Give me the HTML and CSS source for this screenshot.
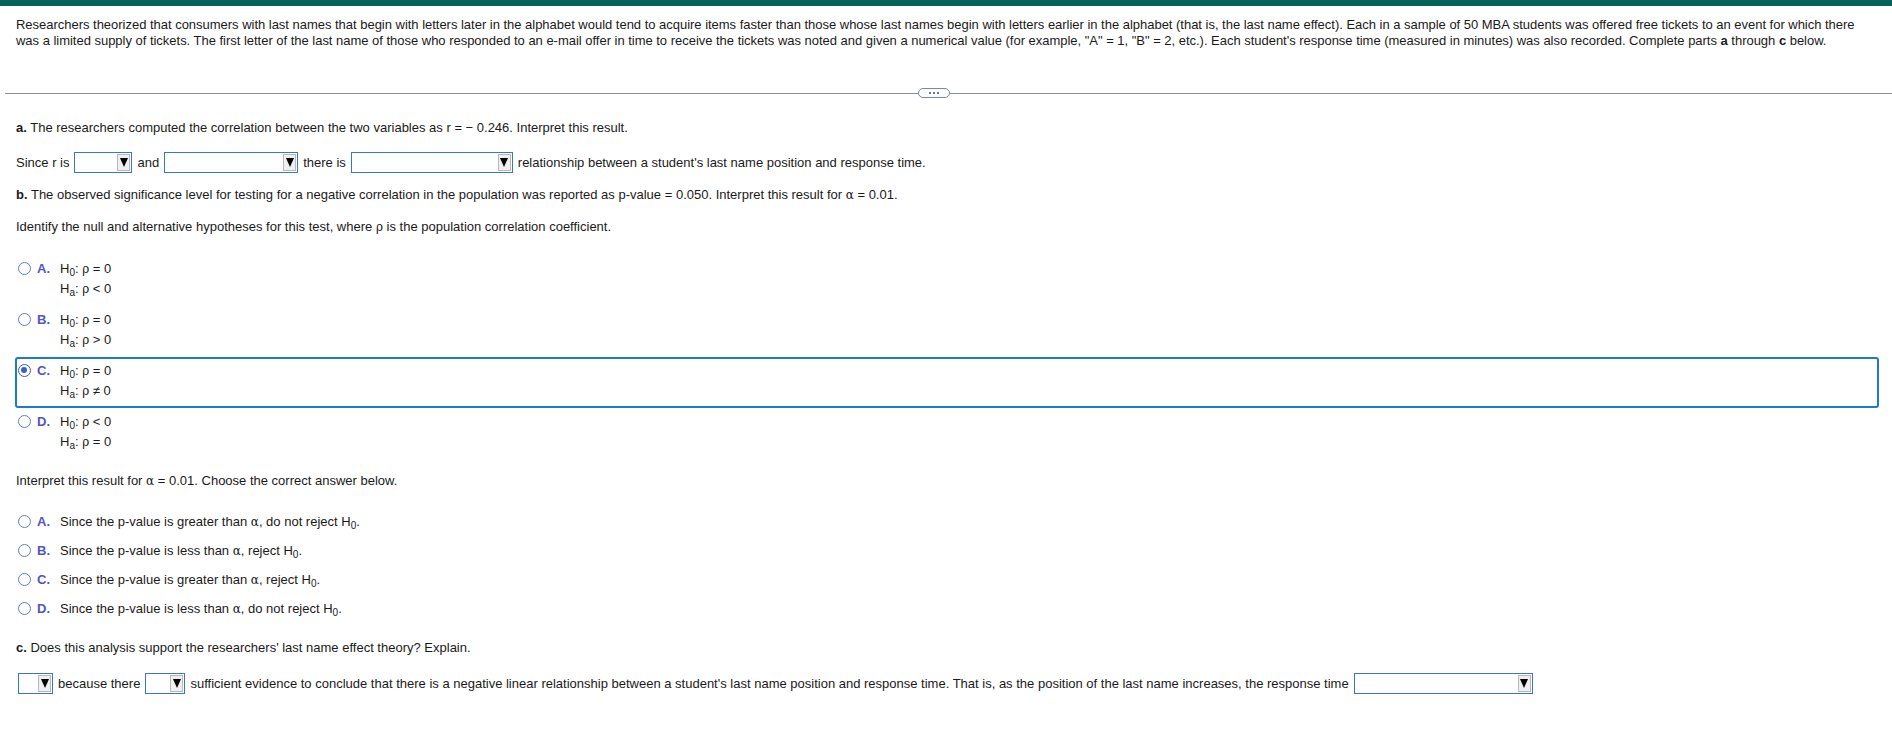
FILE: index.html
```html
<!DOCTYPE html>
<html>
<head>
<meta charset="utf-8">
<link rel="stylesheet" href="styles.css">
</head>
<body>
<div class="topbar"></div>
<div class="page">
  <p class="intro">Researchers theorized that consumers with last names that begin with letters later in the alphabet would tend to acquire items faster than those whose last names begin with letters earlier in the alphabet (that is, the last name effect). Each in a sample of 50 MBA students was offered free tickets to an event for which there was a limited supply of tickets. The first letter of the last name of those who responded to an e-mail offer in time to receive the tickets was noted and given a numerical value (for example, "A" = 1, "B" = 2, etc.). Each student's response time (measured in minutes) was also recorded. Complete parts <b>a</b> through <b>c</b> below.</p>
</div>
<div class="divider">
  <span class="line line-left"></span>
  <span class="pill"><i></i><i></i><i></i></span>
  <span class="line line-right"></span>
</div>
<div class="page">
  <p class="q q-a"><b>a.</b> The researchers computed the correlation between the two variables as r = − 0.246. Interpret this result.</p>
  <div class="row row-a">
    <span>Since r is</span>
    <span class="dd dd-58"><span class="arr"></span></span>
    <span>and</span>
    <span class="dd dd-134"><span class="arr"></span></span>
    <span>there is</span>
    <span class="dd dd-162"><span class="arr"></span></span>
    <span>relationship between a student's last name position and response time.</span>
  </div>
  <p class="q q-b"><b>b.</b> The observed significance level for testing for a negative correlation in the population was reported as p-value = 0.050. Interpret this result for <span class="greek">α</span> = 0.01.</p>
  <p class="q q-id">Identify the null and alternative hypotheses for this test, where <span class="greek">ρ</span> is the population correlation coefficient.</p>

  <div class="opts opts-hyp">
    <div class="opt">
      <span class="radio"></span><span class="letter">A.</span>
      <div class="body"><div>H<sub>0</sub>: <span class="greek">ρ</span> = 0</div><div>H<sub>a</sub>: <span class="greek">ρ</span> &lt; 0</div></div>
    </div>
    <div class="opt">
      <span class="radio"></span><span class="letter">B.</span>
      <div class="body"><div>H<sub>0</sub>: <span class="greek">ρ</span> = 0</div><div>H<sub>a</sub>: <span class="greek">ρ</span> &gt; 0</div></div>
    </div>
    <div class="opt opt-selected">
      <span class="radio radio-on"></span><span class="letter">C.</span>
      <div class="body"><div>H<sub>0</sub>: <span class="greek">ρ</span> = 0</div><div>H<sub>a</sub>: <span class="greek">ρ</span> ≠ 0</div></div>
    </div>
    <div class="opt">
      <span class="radio"></span><span class="letter">D.</span>
      <div class="body"><div>H<sub>0</sub>: <span class="greek">ρ</span> &lt; 0</div><div>H<sub>a</sub>: <span class="greek">ρ</span> = 0</div></div>
    </div>
  </div>

  <p class="q q-int">Interpret this result for <span class="greek">α</span> = 0.01. Choose the correct answer below.</p>

  <div class="opts opts-int">
    <div class="opt opt-line">
      <span class="radio"></span><span class="letter">A.</span>
      <div class="body">Since the p-value is greater than <span class="greek">α</span>, do not reject H<sub>0</sub>.</div>
    </div>
    <div class="opt opt-line">
      <span class="radio"></span><span class="letter">B.</span>
      <div class="body">Since the p-value is less than <span class="greek">α</span>, reject H<sub>0</sub>.</div>
    </div>
    <div class="opt opt-line">
      <span class="radio"></span><span class="letter">C.</span>
      <div class="body">Since the p-value is greater than <span class="greek">α</span>, reject H<sub>0</sub>.</div>
    </div>
    <div class="opt opt-line">
      <span class="radio"></span><span class="letter">D.</span>
      <div class="body">Since the p-value is less than <span class="greek">α</span>, do not reject H<sub>0</sub>.</div>
    </div>
  </div>

  <p class="q q-c"><b>c.</b> Does this analysis support the researchers' last name effect theory? Explain.</p>
  <div class="row row-c">
    <span class="dd dd-35"><span class="arr"></span></span>
    <span>because there</span>
    <span class="dd dd-40"><span class="arr"></span></span>
    <span>sufficient evidence to conclude that there is a negative linear relationship between a student's last name position and response time. That is, as the position of the last name increases, the response time</span>
    <span class="dd dd-179"><span class="arr"></span></span>
  </div>
</div>
</body>
</html>
```
FILE: styles.css
```css
html, body {
  margin: 0;
  padding: 0;
  background: #ffffff;
}
body {
  font-family: "Liberation Sans", Arial, sans-serif;
  font-size: 13px;
  color: #1a1a1a;
}
.topbar {
  height: 6px;
  background: #04625a;
}
.page {
  padding: 0 13px 0 16px;
}
.intro {
  margin: 11px 0 0;
  line-height: 16px;
  max-width: 1852px;
  letter-spacing: -0.02px;
}
.divider {
  display: flex;
  align-items: center;
  height: 10px;
  margin: 39px 0 0 5px;
}
.line {
  height: 1px;
  background: #8b929b;
}
.line-left {
  flex: 0 0 913px;
}
.line-right {
  flex: 1;
}
.pill {
  flex: 0 0 auto;
  box-sizing: border-box;
  width: 32px;
  height: 10px;
  border: 1px solid #7f8995;
  border-radius: 5px;
  background: #fbfbfc;
  display: flex;
  align-items: center;
  justify-content: center;
  gap: 2px;
}
.pill i {
  width: 2px;
  height: 2px;
  background: #6f7985;
}
.q {
  margin: 0;
  line-height: 20px;
}
.q-a { margin-top: 20px; }
.q-b { margin-top: 12px; }
.q-id { margin-top: 12px; }
.q-int { margin-top: 12px; }
.q-c { margin-top: 15px; }
.greek {
  font-family: "DejaVu Serif", "Liberation Serif", serif;
  font-size: 12px;
}
.row {
  display: flex;
  align-items: center;
  gap: 5px;
  height: 22px;
  white-space: nowrap;
}
.row-a { margin-top: 13px; }
.row-c { margin-top: 14px; margin-left: 2px; }
.dd {
  box-sizing: border-box;
  display: inline-flex;
  align-items: center;
  justify-content: flex-end;
  height: 21px;
  padding-right: 1px;
  border: 1px solid #3a72d8;
  background: #ffffff;
}
.dd-58 { width: 58px; }
.dd-134 { width: 134px; }
.dd-162 { width: 162px; }
.dd-35 { width: 35px; }
.dd-40 { width: 40px; }
.dd-179 { width: 179px; }
.arr {
  box-sizing: border-box;
  width: 13px;
  height: 17px;
  background: #efefef;
  border: 1px solid #b9b9b9;
  display: flex;
  align-items: center;
  justify-content: center;
}
.arr::before {
  content: "";
  border-left: 4px solid transparent;
  border-right: 4px solid transparent;
  border-top: 9px solid #000;
}
.opts {
  margin-left: -1px;
}
.opts-hyp { margin-top: 18px; }
.opts-int { margin-top: 16px; }
.opt {
  display: flex;
  align-items: flex-start;
  border: 2px solid transparent;
  border-radius: 3px;
  padding: 2px 0 5px 1px;
  line-height: 20px;
}
.body > div {
  height: 20px;
}
.opt-line {
  border: 0;
  height: 21px;
  padding: 4px 0 4px 3px;
  line-height: 21px;
}
.opt-line .radio {
  margin-top: 4px;
}
.opt-selected {
  border-color: #1a7bcf;
}
.radio {
  flex: 0 0 auto;
  box-sizing: border-box;
  width: 13px;
  height: 13px;
  margin-top: 3px;
  border: 1.5px solid #5a80c8;
  border-radius: 50%;
  background: #fff;
  position: relative;
}
.radio-on {
  border-color: #3a5cb0;
}
.radio-on::after {
  content: "";
  position: absolute;
  left: 2px;
  top: 2px;
  width: 6px;
  height: 6px;
  border-radius: 50%;
  background: #3b5fc8;
}
.letter {
  flex: 0 0 auto;
  width: 23px;
  margin-left: 6px;
  font-weight: bold;
  color: #5454c4;
}
.body sub {
  font-size: 10px;
  vertical-align: -3px;
  line-height: 0;
}
```
